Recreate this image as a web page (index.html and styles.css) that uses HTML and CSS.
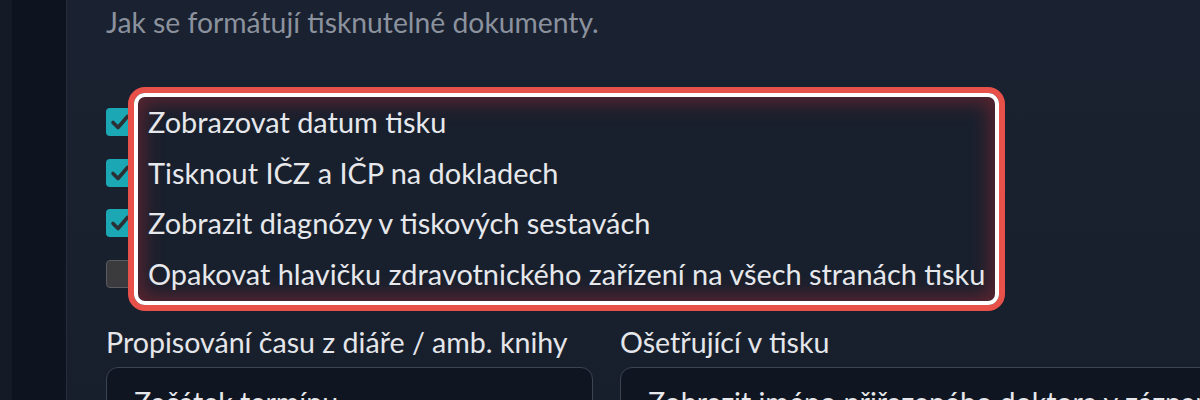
FILE: index.html
```html
<!DOCTYPE html>
<html lang="cs">
<head>
<meta charset="utf-8">
<title>Tisk</title>
<link rel="stylesheet" href="styles.css">
</head>
<body>
<div class="app">
  <aside class="sidebar"><div class="sidebar-edge"></div></aside>
  <main class="main">
    <p class="subtitle">Jak se formátují tisknutelné dokumenty.</p>
    <div class="checks">
      <div class="highlight"></div>
      <label class="row"><span class="box on"><svg viewBox="0 0 28 28"><path d="M7 14.5 L12 19.5 L21.5 8.5" /></svg></span><span class="text">Zobrazovat datum tisku</span></label>
      <label class="row"><span class="box on"><svg viewBox="0 0 28 28"><path d="M7 14.5 L12 19.5 L21.5 8.5" /></svg></span><span class="text">Tisknout IČZ a IČP na dokladech</span></label>
      <label class="row"><span class="box on"><svg viewBox="0 0 28 28"><path d="M7 14.5 L12 19.5 L21.5 8.5" /></svg></span><span class="text">Zobrazit diagnózy v tiskových sestavách</span></label>
      <label class="row"><span class="box off"></span><span class="text">Opakovat hlavičku zdravotnického zařízení na všech stranách tisku</span></label>
    </div>
    <div class="fields">
      <div class="field">
        <div class="field-label">Propisování času z diáře / amb. knihy</div>
        <div class="select">Začátek termínu</div>
      </div>
      <div class="field">
        <div class="field-label">Ošetřující v tisku</div>
        <div class="select">Zobrazit jméno přiřazeného doktora v záznamu</div>
      </div>
    </div>
  </main>
</div>
</body>
</html>
```
FILE: styles.css
```css
html, body {
  margin: 0;
  padding: 0;
  height: 100%;
  overflow: hidden;
}
body {
  background: #181f2c;
  font-family: "Lato", "Noto Sans", sans-serif;
  color: #e4e6ea;
}
.app {
  display: flex;
  height: 400px;
}
.sidebar {
  width: 66px;
  flex: none;
  background: #0e1320;
  border-right: 1px solid #262d3a;
  display: flex;
}
.sidebar-edge {
  width: 12px;
  background: #141a26;
}
.main {
  flex: 1;
  padding-left: 39px;
  min-width: 0;
  background: linear-gradient(180deg, #1a2130 0%, #181f2c 100%);
}
.subtitle {
  margin: 5px 0 0 0;
  font-size: 28.3px;
  line-height: 34px;
  color: #8b929e;
  white-space: nowrap;
}
.checks {
  position: relative;
  margin-top: 58px;
  display: flex;
  flex-direction: column;
}
.row {
  height: 50.6px;
  display: flex;
  align-items: center;
  gap: 14px;
}
.box {
  width: 28px;
  height: 28px;
  box-sizing: border-box;
  border-radius: 4px;
  flex: none;
  display: flex;
  align-items: center;
  justify-content: center;
}
.box.on {
  background: #1ba7b3;
}
.box.off {
  background: #3b3b3d;
  border: 1.5px solid #5b5c60;
}
.box svg {
  width: 28px;
  height: 28px;
}
.box path {
  fill: none;
  stroke: #2b3034;
  stroke-width: 3.6;
  stroke-linecap: round;
  stroke-linejoin: round;
}
.text {
  position: relative;
  z-index: 2;
  font-size: 28.9px;
  line-height: 34px;
  color: #e6e8ec;
  white-space: nowrap;
}
.highlight {
  position: absolute;
  z-index: 1;
  left: 22px;
  top: -10px;
  width: 877px;
  height: 224px;
  box-sizing: border-box;
  border: 6px solid #e8514a;
  border-radius: 17px;
  pointer-events: none;
}
.highlight::after {
  content: "";
  position: absolute;
  inset: 0;
  border: 4px solid #ffffff;
  border-radius: 11px;
  background: #19202d;
  box-shadow: inset 0 0 18px 6px rgba(110, 38, 48, 0.75);
}
.fields {
  display: grid;
  grid-template-columns: 487px 640px;
  column-gap: 27px;
  margin-top: 26px;
}
.field-label {
  font-size: 28.6px;
  line-height: 34px;
  color: #e4e6ea;
  white-space: nowrap;
}
.select {
  margin-top: 8px;
  height: 64px;
  box-sizing: border-box;
  border: 1.5px solid #3b4453;
  border-radius: 12px;
  background: #101522;
  padding: 17px 27px 0;
  font-size: 28.6px;
  line-height: 34px;
  color: #e6e8ec;
  white-space: nowrap;
  overflow: hidden;
}
```
